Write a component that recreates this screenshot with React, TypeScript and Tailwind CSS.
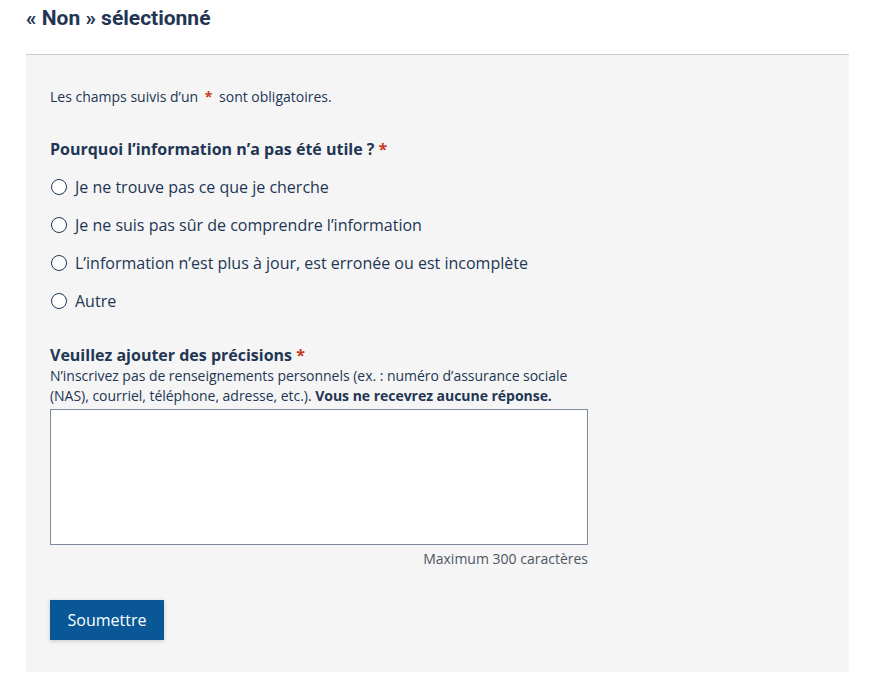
import React from "react";

const options = [
  "Je ne trouve pas ce que je cherche",
  "Je ne suis pas sûr de comprendre l’information",
  "L’information n’est plus à jour, est erronée ou est incomplète",
  "Autre",
];

export default function App() {
  return (
    <div className="w-[871px] h-[687px] bg-white pl-[26px] text-[#223654] [font-family:'Open_Sans',sans-serif]">
      <h2 className="mt-[6px] text-[21px] leading-[24px] font-bold [font-family:Roboto,sans-serif] text-[#223654]">
        « Non » sélectionné
      </h2>
      <div className="mt-[24px] w-[823px] border-t border-[#c5cad2] bg-[#f5f5f5] pl-[24px] pt-[33px] pb-[32px]">
        <p className="text-[14px] leading-[18px]">
          Les champs suivis d’un <span className="text-[#cb381f] font-bold mx-[3px]">*</span> sont obligatoires.
        </p>
        <fieldset className="mt-[31px]">
          <legend className="text-[16px] leading-[24px] font-bold">
            Pourquoi l’information n’a pas été utile ? <span className="text-[#cb381f]">*</span>
          </legend>
          <div className="mt-[14px] flex flex-col gap-[14px]">
            {options.map((o) => (
              <label key={o} className="flex items-center h-[24px] text-[16px] leading-[24px]">
                <span className="ml-[1px] w-[16px] h-[16px] rounded-full border-[1.5px] border-[#223654] bg-white" />
                <span className="ml-[8px]">{o}</span>
              </label>
            ))}
          </div>
        </fieldset>
        <div className="mt-[31px] w-[540px]">
          <div className="text-[16px] leading-[22px] font-bold">
            Veuillez ajouter des précisions <span className="text-[#cb381f]">*</span>
          </div>
          <p className="text-[14px] leading-[20px] tracking-[-0.03px]">
            N’inscrivez pas de renseignements personnels (ex. : numéro d’assurance sociale (NAS), courriel, téléphone, adresse, etc.).{" "}
            <span className="font-bold">Vous ne recevrez aucune réponse.</span>
          </p>
          <div className="mt-[3px] h-[136px] w-[538px] border border-[#808a9d] bg-white" />
          <div className="mt-[4px] w-[538px] text-right text-[14px] leading-[20px] text-[#4e5662]">Maximum 300 caractères</div>
        </div>
        <button className="mt-[31px] h-[40px] w-[114px] bg-[#095797] text-white text-[16px] leading-[24px] shadow-[0_1px_4px_rgba(34,54,84,0.24)]">
          Soumettre
        </button>
      </div>
    </div>
  );
}
